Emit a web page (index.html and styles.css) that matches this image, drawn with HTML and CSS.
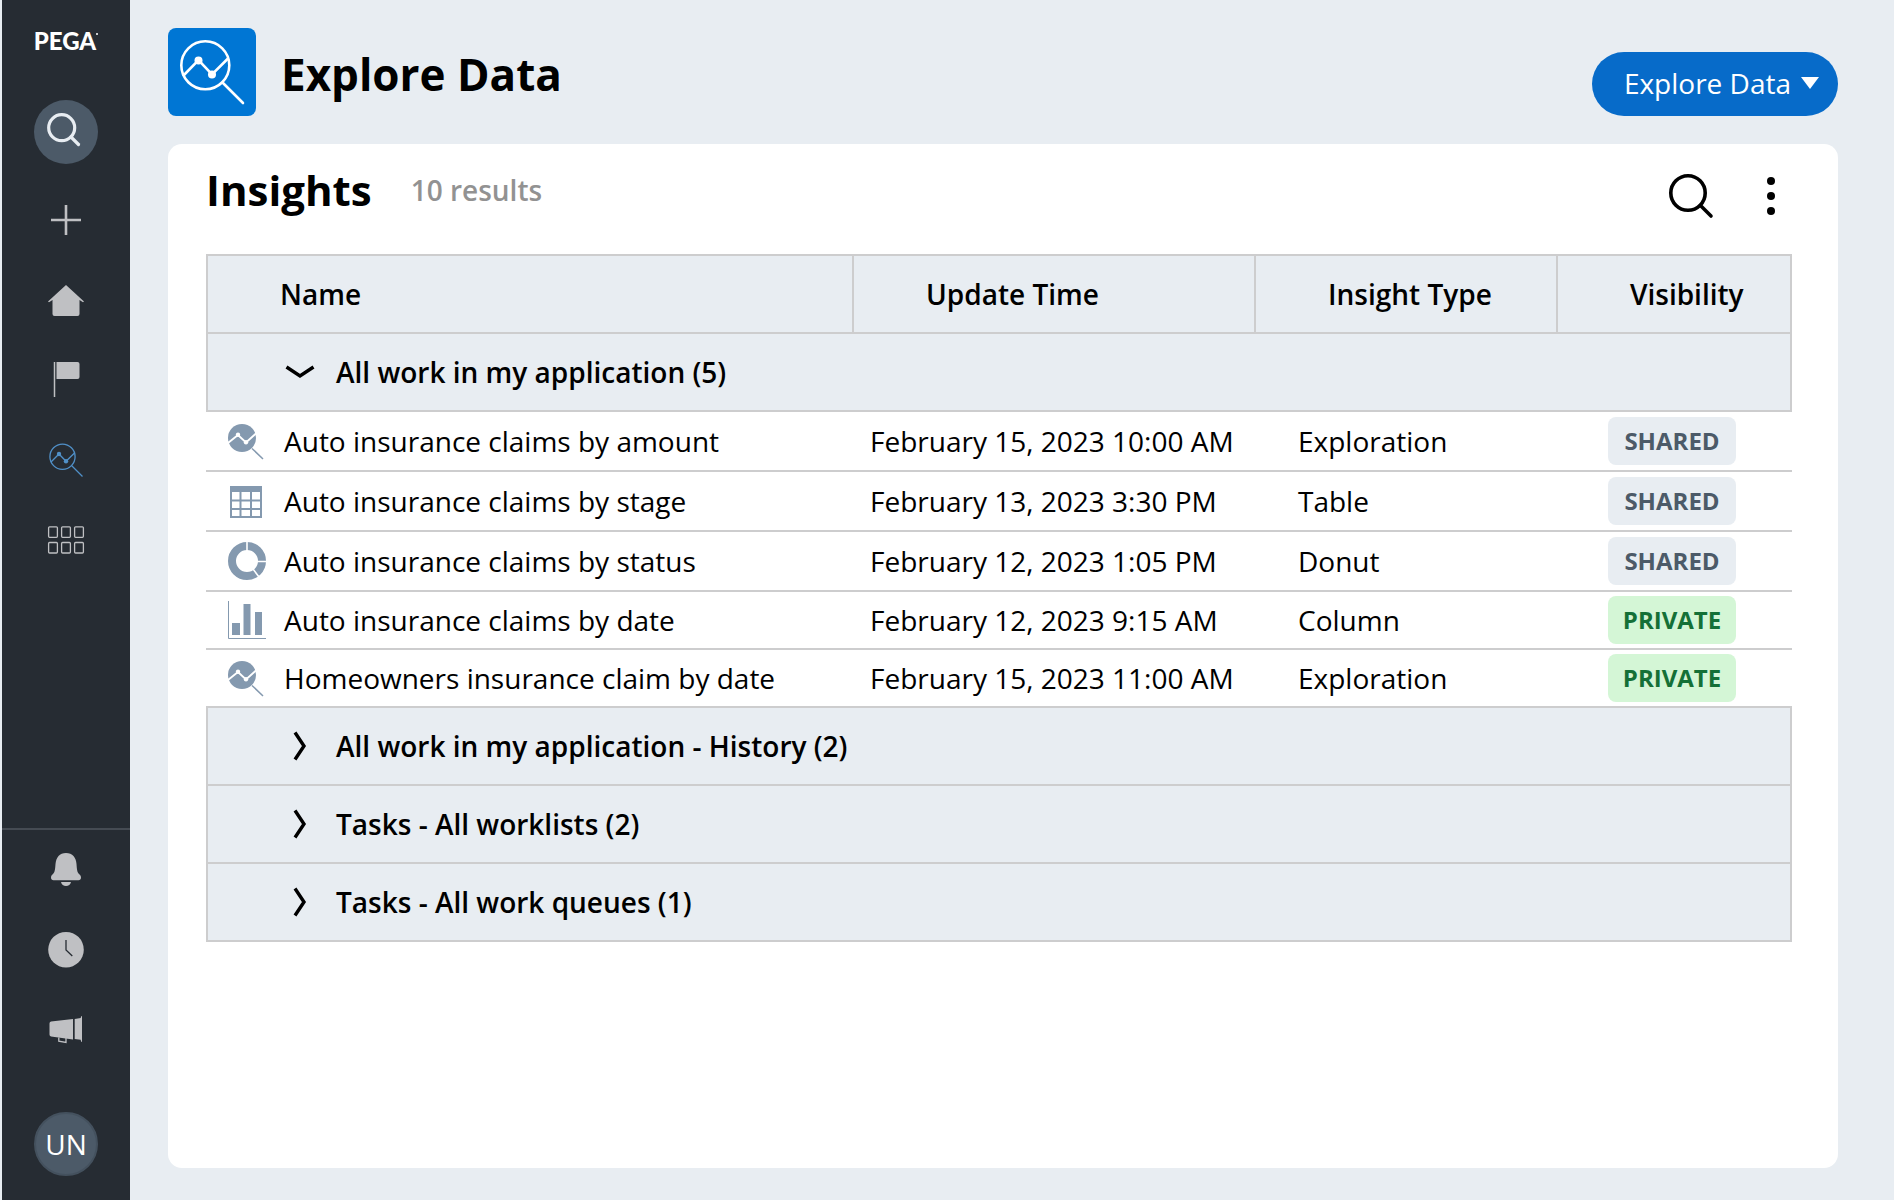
FILE: index.html
```
<!DOCTYPE html>
<html lang="en">
<head>
<meta charset="utf-8">
<meta name="viewport" content="width=device-width, initial-scale=1">
<title>Explore Data</title>
<link rel="stylesheet" href="styles.css">
</head>
<body>
<svg class="sprite" aria-hidden="true">
  <symbol id="i-exploration" viewBox="0 0 38 38">
    <circle cx="14" cy="16" r="14" fill="currentColor"/>
    <path d="M0 21 10 13l8 7.500L28.500 11" fill="none" stroke="#fff" stroke-width="1.800"/>
    <circle cx="10" cy="12.800" r="2.200" fill="#fff"/><circle cx="18" cy="20.200" r="2.200" fill="#fff"/>
    <path d="M24 26.500 35 37" stroke="currentColor" stroke-width="1.500"/>
  </symbol>
  <symbol id="i-table" viewBox="0 0 38 38">
    <path d="M2 4h32v6H2z" fill="currentColor"/>
    <path d="M3 8v28M12.500 8v28M23 8v28M33 8v28M2 18.500h32M2 27h32M2 35h32" stroke="currentColor" stroke-width="2" fill="none"/>
  </symbol>
  <symbol id="i-donut" viewBox="0 0 38 38">
    <circle cx="19" cy="19" r="15" fill="none" stroke="currentColor" stroke-width="8"/>
    <path d="M19 9V0M29 19.500h9M25 27l6 8" stroke="#fff" stroke-width="1.600"/>
  </symbol>
  <symbol id="i-column" viewBox="0 0 38 38">
    <path d="M.5 0v37.500H38" fill="none" stroke="currentColor"/>
    <path d="M4 22h8v12H4zM15.500 3h7v31h-7zM27 11h7v23h-7z" fill="currentColor"/>
  </symbol>
  <symbol id="i-chevron" viewBox="0 0 16 30">
    <path d="M3 1.500 12 15 3 28.500" fill="none" stroke="currentColor" stroke-width="3.400"/>
  </symbol>
</svg>

<div class="app">
  <nav class="sidebar" aria-label="Main">
    <div class="brand">PEGA<span class="mark"></span></div>
    <button class="round" aria-label="Search">
      <svg viewBox="0 0 64 64"><g fill="none" stroke="#e8edf2" stroke-width="3.200" stroke-linecap="round"><circle cx="27.700" cy="27.700" r="13"/><path d="M37 37l7.500 7.500"/></g></svg>
    </button>
    <div class="items">
      <a href="#" aria-label="Create"><svg viewBox="0 0 40 40"><path d="M20 5v30M5 20h30" stroke="currentColor" stroke-width="2.600"/></svg></a>
      <a href="#" aria-label="Home"><svg viewBox="0 0 40 40"><path d="M20 5 38 21.500l-1 .8L33.500 20v14a2 2 0 0 1-2 2h-23a2 2 0 0 1-2-2V20L3 22.300l-1-.8z" fill="currentColor"/></svg></a>
      <a href="#" aria-label="Flagged"><svg viewBox="0 0 40 40"><path d="M8.500 2v35" stroke="currentColor" stroke-width="1.500"/><path d="M10.500 2H31.500a2 2 0 0 1 2 2v13a2 2 0 0 1-2 2h-21z" fill="currentColor"/></svg></a>
      <a href="#" class="current" aria-label="Explore data" aria-current="page"><svg viewBox="0 0 40 40"><g fill="none" stroke="currentColor" stroke-width="1.300"><circle cx="16.500" cy="16.700" r="12.600"/><path d="M5 22l8-8 7 7.300 8.500-8.300M25.500 25.500 36.500 36.500"/></g><circle cx="13" cy="14" r="2.200" fill="currentColor"/><circle cx="20" cy="21.300" r="2.200" fill="currentColor"/></svg></a>
      <a href="#" aria-label="Apps"><svg viewBox="0 0 40 40"><g fill="none" stroke="currentColor" stroke-width="1.300"><rect x="2.600" y="6.800" width="8.800" height="10.500" rx="1"/><rect x="15.600" y="6.800" width="8.800" height="10.500" rx="1"/><rect x="28.600" y="6.800" width="8.800" height="10.500" rx="1"/><rect x="2.600" y="22.500" width="8.800" height="10.500" rx="1"/><rect x="15.600" y="22.500" width="8.800" height="10.500" rx="1"/><rect x="28.600" y="22.500" width="8.800" height="10.500" rx="1"/></g></svg></a>
    </div>
    <div class="items lower">
      <a href="#" aria-label="Notifications"><svg viewBox="0 0 40 40"><path d="M20 3c6.500 0 10 4.500 10.500 11 .4 5.500.8 8.500 2.500 10 1.200 1 2 2 2 3.500 0 1.800-1 2.800-2.500 2.800h-25C6 30.300 5 29.300 5 27.500 5 26 5.800 25 7 24c1.700-1.500 2.100-4.500 2.500-10C10 7.500 13.500 3 20 3z" fill="currentColor"/><path d="M15 32h10c-.5 2.500-2.500 4-5 4s-4.500-1.500-5-4z" fill="currentColor"/></svg></a>
      <a href="#" aria-label="Recents"><svg viewBox="0 0 40 40"><circle cx="20" cy="19.700" r="17.800" fill="currentColor"/><path d="M20 10v10l6.300 6" fill="none" stroke="#262c33" stroke-width="1.300"/></svg></a>
      <a href="#" aria-label="Announcements"><svg viewBox="0 0 40 40"><path d="M5 11.500 27 9v20.500L5 26.500a2 2 0 0 1-1.500-2v-11a2 2 0 0 1 1.500-2zM28.700 9l6-1 .4-1.800h.9v25.600h-.9l-.4-2-6-.8z" fill="currentColor"/><path d="M12.800 27.500v3.700l7.200 1.300v-4.500" fill="none" stroke="currentColor" stroke-width="1.300"/></svg></a>
    </div>
    <button class="round avatar" aria-label="User menu">UN</button>
  </nav>

  <main class="main">
    <header class="page-head">
      <svg class="tile" viewBox="0 0 88 88" aria-hidden="true"><g fill="none" stroke="#fff" stroke-width="2.600"><circle cx="37.300" cy="37.300" r="24"/><path d="M15 48l15.500-15.800L44 46.500l16-16"/><path d="M54.500 54.500 75 75" stroke-linecap="round"/></g><circle cx="30.500" cy="32.500" r="4" fill="#fff"/><circle cx="44" cy="46.500" r="4" fill="#fff"/></svg>
      <h1>Explore Data</h1>
      <button class="primary">Explore Data<svg viewBox="0 0 18 12" aria-hidden="true"><path d="M0 0h18L9 12z" fill="currentColor"/></svg></button>
    </header>

    <section class="card">
      <div class="card-head">
        <h2>Insights</h2>
        <span class="count">10 results</span>
        <div class="tools">
          <button class="find" aria-label="Search insights"><svg viewBox="0 0 48 48"><g fill="none" stroke="currentColor" stroke-width="3.600"><circle cx="21" cy="21" r="17.200"/><path d="M33.500 33.500 44 44" stroke-linecap="round"/></g></svg></button>
          <button class="more" aria-label="More actions"><svg viewBox="0 0 40 48"><circle cx="19" cy="9" r="4"/><circle cx="19" cy="24" r="4"/><circle cx="19" cy="39" r="4"/></svg></button>
        </div>
      </div>

      <table>
        <colgroup><col><col class="c-time"><col class="c-type"><col class="c-vis"></colgroup>
        <thead>
          <tr><th scope="col">Name</th><th scope="col">Update Time</th><th scope="col">Insight Type</th><th scope="col">Visibility</th></tr>
        </thead>
        <tbody>
          <tr class="group"><th colspan="4" scope="rowgroup"><button aria-expanded="true"><svg><use href="#i-chevron"/></svg>All work in my application (5)</button></th></tr>
          <tr class="tall"><td><div class="name"><svg><use href="#i-exploration"/></svg>Auto insurance claims by amount</div></td><td>February 15, 2023 10:00 AM</td><td class="type">Exploration</td><td><span class="badge">SHARED</span></td></tr>
          <tr class="tall"><td><div class="name"><svg><use href="#i-table"/></svg>Auto insurance claims by stage</div></td><td>February 13, 2023 3:30 PM</td><td class="type">Table</td><td><span class="badge">SHARED</span></td></tr>
          <tr class="tall"><td><div class="name"><svg><use href="#i-donut"/></svg>Auto insurance claims by status</div></td><td>February 12, 2023 1:05 PM</td><td class="type">Donut</td><td><span class="badge">SHARED</span></td></tr>
          <tr><td><div class="name"><svg><use href="#i-column"/></svg>Auto insurance claims by date</div></td><td>February 12, 2023 9:15 AM</td><td class="type">Column</td><td><span class="badge private">PRIVATE</span></td></tr>
          <tr><td><div class="name"><svg><use href="#i-exploration"/></svg>Homeowners insurance claim by date</div></td><td>February 15, 2023 11:00 AM</td><td class="type">Exploration</td><td><span class="badge private">PRIVATE</span></td></tr>
        </tbody>
        <tbody>
          <tr class="group"><th colspan="4" scope="rowgroup"><button aria-expanded="false"><svg><use href="#i-chevron"/></svg>All work in my application - History (2)</button></th></tr>
        </tbody>
        <tbody>
          <tr class="group"><th colspan="4" scope="rowgroup"><button aria-expanded="false"><svg><use href="#i-chevron"/></svg>Tasks - All worklists (2)</button></th></tr>
        </tbody>
        <tbody>
          <tr class="group"><th colspan="4" scope="rowgroup"><button aria-expanded="false"><svg><use href="#i-chevron"/></svg>Tasks - All work queues (1)</button></th></tr>
        </tbody>
      </table>
    </section>
  </main>
</div>
</body>
</html>
```
FILE: styles.css
```
:root {
  --page: #e8edf2;
  --line: #cdcdce;
  --dark: #262c33;
  --slate: #4c5a68;
  --icon: #bfc0c3;
}

* { box-sizing: border-box; }

body {
  margin: 0;
  background: var(--page);
  color: #000;
  font-family: "Open Sans", "Noto Sans", sans-serif;
  font-size: 28px;
  line-height: 40px;
}

button {
  border: 0;
  padding: 0;
  background: none;
  color: inherit;
  font: inherit;
  cursor: pointer;
}

svg { display: block; flex: none; }
.sprite { display: none; }

.app { display: flex; min-height: 100vh; }

/* Sidebar */
.sidebar {
  display: flex;
  flex: none;
  flex-direction: column;
  align-items: center;
  width: 130px;
  padding-bottom: 24px;
  border-left: 2px solid var(--page);
  background: var(--dark);
}

.brand {
  display: flex;
  height: 100px;
  padding-top: 21px;
  color: #fff;
  font-family: Lato, sans-serif;
  font-size: 24px;
  font-weight: 900;
}

.mark {
  width: 2px;
  height: 2px;
  margin-top: 12px;
  border-radius: 50%;
  background: #fff;
}

.round {
  width: 64px;
  height: 64px;
  border-radius: 50%;
  background: var(--slate);
}

.avatar {
  margin-top: 42px;
  border: 2px solid #44515e;
  color: #fff;
}

.items {
  width: 100%;
  margin-top: 16px;
}

.items a {
  display: grid;
  place-items: center;
  height: 80px;
  color: var(--icon);
}

.items svg { width: 40px; height: 40px; }
.items .current { color: #5090c8; }

.lower {
  margin-top: auto;
  border-top: 2px solid #454b53;
}

/* Page */
.main {
  display: flex;
  flex: 1;
  flex-direction: column;
  gap: 28px;
  min-width: 0;
  padding: 28px 56px 32px 38px;
}

.page-head { display: flex; align-items: center; }

.tile {
  width: 88px;
  height: 88px;
  border-radius: 8px;
  background: #0076d4;
}

h1, h2 {
  margin: 0;
  font-size: 44px;
  font-weight: 700;
  line-height: 60px;
}

h1 { margin-left: 25px; padding-top: 4px; }
h2 { font-size: 42px; }

.primary {
  display: flex;
  align-items: center;
  align-self: flex-end;
  gap: 10px;
  height: 64px;
  margin-left: auto;
  padding: 0 19px 2px 32px;
  border-radius: 32px;
  background: #076bc9;
  color: #fff;
}

.primary svg { width: 18px; height: 12px; }

.card {
  flex: 1;
  padding: 0 46px 32px 38px;
  border-radius: 14px;
  background: #fff;
}

.card-head {
  display: flex;
  align-items: center;
  height: 110px;
  padding-bottom: 18px;
}

.count {
  margin-left: 39px;
  color: #929292;
  font-weight: 600;
}

.tools {
  display: flex;
  gap: 37px;
  margin-left: auto;
  padding-top: 12px;
}

.find svg { width: 48px; height: 48px; }
.more svg { width: 40px; height: 48px; }

/* Insights table */
table {
  width: 100%;
  border-collapse: separate;
  border-spacing: 0;
  table-layout: fixed;
}

.c-time { width: 402px; }
.c-type { width: 302px; }
.c-vis { width: 234px; }

th {
  padding: 0;
  background: var(--page);
  font-weight: 600;
  text-align: left;
}

thead th {
  height: 80px;
  padding-left: 72px;
  border: solid var(--line);
  border-width: 2px 2px 2px 0;
}

thead th:first-child { border-left-width: 2px; }

.group th {
  height: 78px;
  border: solid var(--line);
  border-width: 0 2px 2px;
}

.group button {
  display: flex;
  align-items: center;
  gap: 21px;
  width: 100%;
  padding-left: 77px;
  text-align: left;
}

.group svg {
  width: 30px;
  height: 30px;
}

.group [aria-expanded="true"] svg { transform: rotate(90deg); }

td {
  height: 58px;
  padding: 0 0 0 16px;
  border-bottom: 2px solid var(--line);
  white-space: nowrap;
}

.tall td { height: 60px; }
td.type { padding-left: 42px; }
td:last-child { padding-left: 50px; }

.name {
  display: flex;
  align-items: center;
  gap: 18px;
  padding-left: 6px;
}

.name svg {
  width: 38px;
  height: 38px;
  color: #8499af;
}

.badge {
  display: block;
  width: 128px;
  border-radius: 8px;
  background: var(--page);
  color: var(--slate);
  font-size: 24px;
  font-weight: 700;
  line-height: 48px;
  text-align: center;
}

.private { background: #d4f6d6; color: #147037; }
```
